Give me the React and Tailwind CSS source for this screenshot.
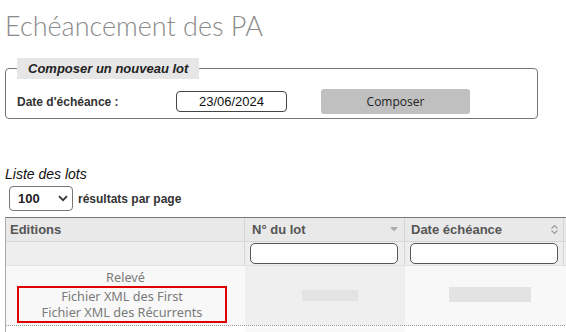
import React from "react";

const Bar = ({ className }) => <div className={`bg-[#e3e3e3] ${className}`} />;

const App = () => {
  return (
    <div className="w-[566px] h-[332px] overflow-hidden bg-white pl-[5px] font-['Liberation_Sans',Arial,sans-serif]">
      {/* Title */}
      <h1 className="pt-[8px] h-[50px] text-[27px] leading-[36px] font-light text-[#8a8a8a] font-['Lato',sans-serif]">
        Echéancement des PA
      </h1>

      {/* Composer un nouveau lot */}
      <fieldset className="mt-[8px] w-[533px] border border-[#777] rounded-[4px] pb-[4px]">
        <legend className="ml-[11px] px-[11px] h-[21px] leading-[21px] bg-[#e6e6e6] text-[13px] font-bold italic text-[#222]">
          Composer un nouveau lot
        </legend>
        <div className="flex items-center mt-[10px] pl-[11px]">
          <span className="w-[159px] text-[12px] font-bold text-[#333]">Date d'échéance :</span>
          <div className="w-[111px] h-[21px] border border-[#444] rounded-[4px] text-center text-[13px] leading-[19px] text-[#111]">
            23/06/2024
          </div>
          <button className="ml-[34px] w-[149px] h-[25px] rounded-[3px] bg-[#c0c0c0] text-[12px] text-[#222] font-['Open_Sans',sans-serif]">
            Composer
          </button>
        </div>
      </fieldset>

      {/* Liste des lots */}
      <div className="mt-[47px] text-[14px] leading-[16px] italic text-[#111]">Liste des lots</div>
      <div className="flex items-center mt-[4px] ml-[4px] h-[25px]">
        <div className="w-[64px] h-[25px] border border-[#777] rounded-[4px] flex items-center justify-between pl-[8px] pr-[4px]">
          <span className="text-[13px] font-bold text-[#222]">100</span>
          <svg width="10" height="7" viewBox="0 0 10 7" fill="none" stroke="#333" strokeWidth="1.8">
            <path d="M1 1.2l4 4 4-4" />
          </svg>
        </div>
        <span className="ml-[5px] text-[12px] font-bold text-[#333]">résultats par page</span>
      </div>

      {/* Table */}
      <div className="mt-[6px] w-[700px] border-t border-t-[#777] border-l border-l-[#aaa]">
        {/* header */}
        <div className="flex h-[24px] bg-[#e9e9e9] border-b border-[#d6d6d6] text-[13px] font-bold text-[#555]">
          <div className="w-[239px] pl-[4px] flex items-center border-r border-[#d6d6d6]">Editions</div>
          <div className="w-[160px] pl-[7px] pr-[6px] flex items-center justify-between border-r border-[#d6d6d6]">
            <span>N° du lot</span>
            <svg width="8" height="5" viewBox="0 0 8 5"><path d="M0 0h8L4 4.5z" fill="#aaa" /></svg>
          </div>
          <div className="w-[159px] pl-[6px] pr-[4px] flex items-center justify-between border-r border-[#d6d6d6]">
            <span>Date échéance</span>
            <svg width="9" height="11" viewBox="0 0 9 11" fill="none" stroke="#999" strokeWidth="1.1">
              <path d="M1.5 4.5l3-3 3 3M1.5 6.5l3 3 3-3" />
            </svg>
          </div>
          <div className="flex-1" />
        </div>
        {/* filter row */}
        <div className="flex h-[24px] bg-[#eeeeee] border-b border-[#e2e2e2]">
          <div className="w-[239px] border-r border-[#d6d6d6]" />
          <div className="w-[160px] flex items-center pl-[5px] border-r border-[#d6d6d6]">
            <div className="w-[148px] h-[21px] bg-white border border-[#555] rounded-[5px]" />
          </div>
          <div className="w-[159px] flex items-center pl-[5px] border-r border-[#d6d6d6]">
            <div className="w-[148px] h-[21px] bg-white border border-[#555] rounded-[5px]" />
          </div>
          <div className="flex-1" />
        </div>
        {/* body row */}
        <div className="flex h-[60px] border-b border-dotted border-[#999]">
          <div className="w-[239px] bg-[#f8f8f8] flex flex-col items-center pt-[3px] text-[12.7px] leading-[16.5px] text-[#7a7a7a] font-['Noto_Sans',sans-serif]">
            <span>Relevé</span>
            <div className="self-start ml-[11px] w-[210px] border-2 border-[#e00000] flex flex-col items-center">
              <span>Fichier XML des First</span>
              <span>Fichier XML des Récurrents</span>
            </div>
          </div>
          <div className="w-[160px] bg-[#efefef] flex items-center justify-center pl-[10px] pb-[1px]">
            <Bar className="w-[56px] h-[11px]" />
          </div>
          <div className="w-[159px] bg-[#f8f8f8] flex items-center justify-center pl-[10px] pb-[3px]">
            <Bar className="w-[82px] h-[15px]" />
          </div>
          <div className="flex-1 bg-[#f8f8f8]" />
        </div>
        <div className="flex h-[10px]">
          <div className="w-[239px] bg-white" />
          <div className="w-[160px] bg-[#f8f8f8]" />
          <div className="flex-1 bg-white" />
        </div>
      </div>
    </div>
  );
};

export default App;
